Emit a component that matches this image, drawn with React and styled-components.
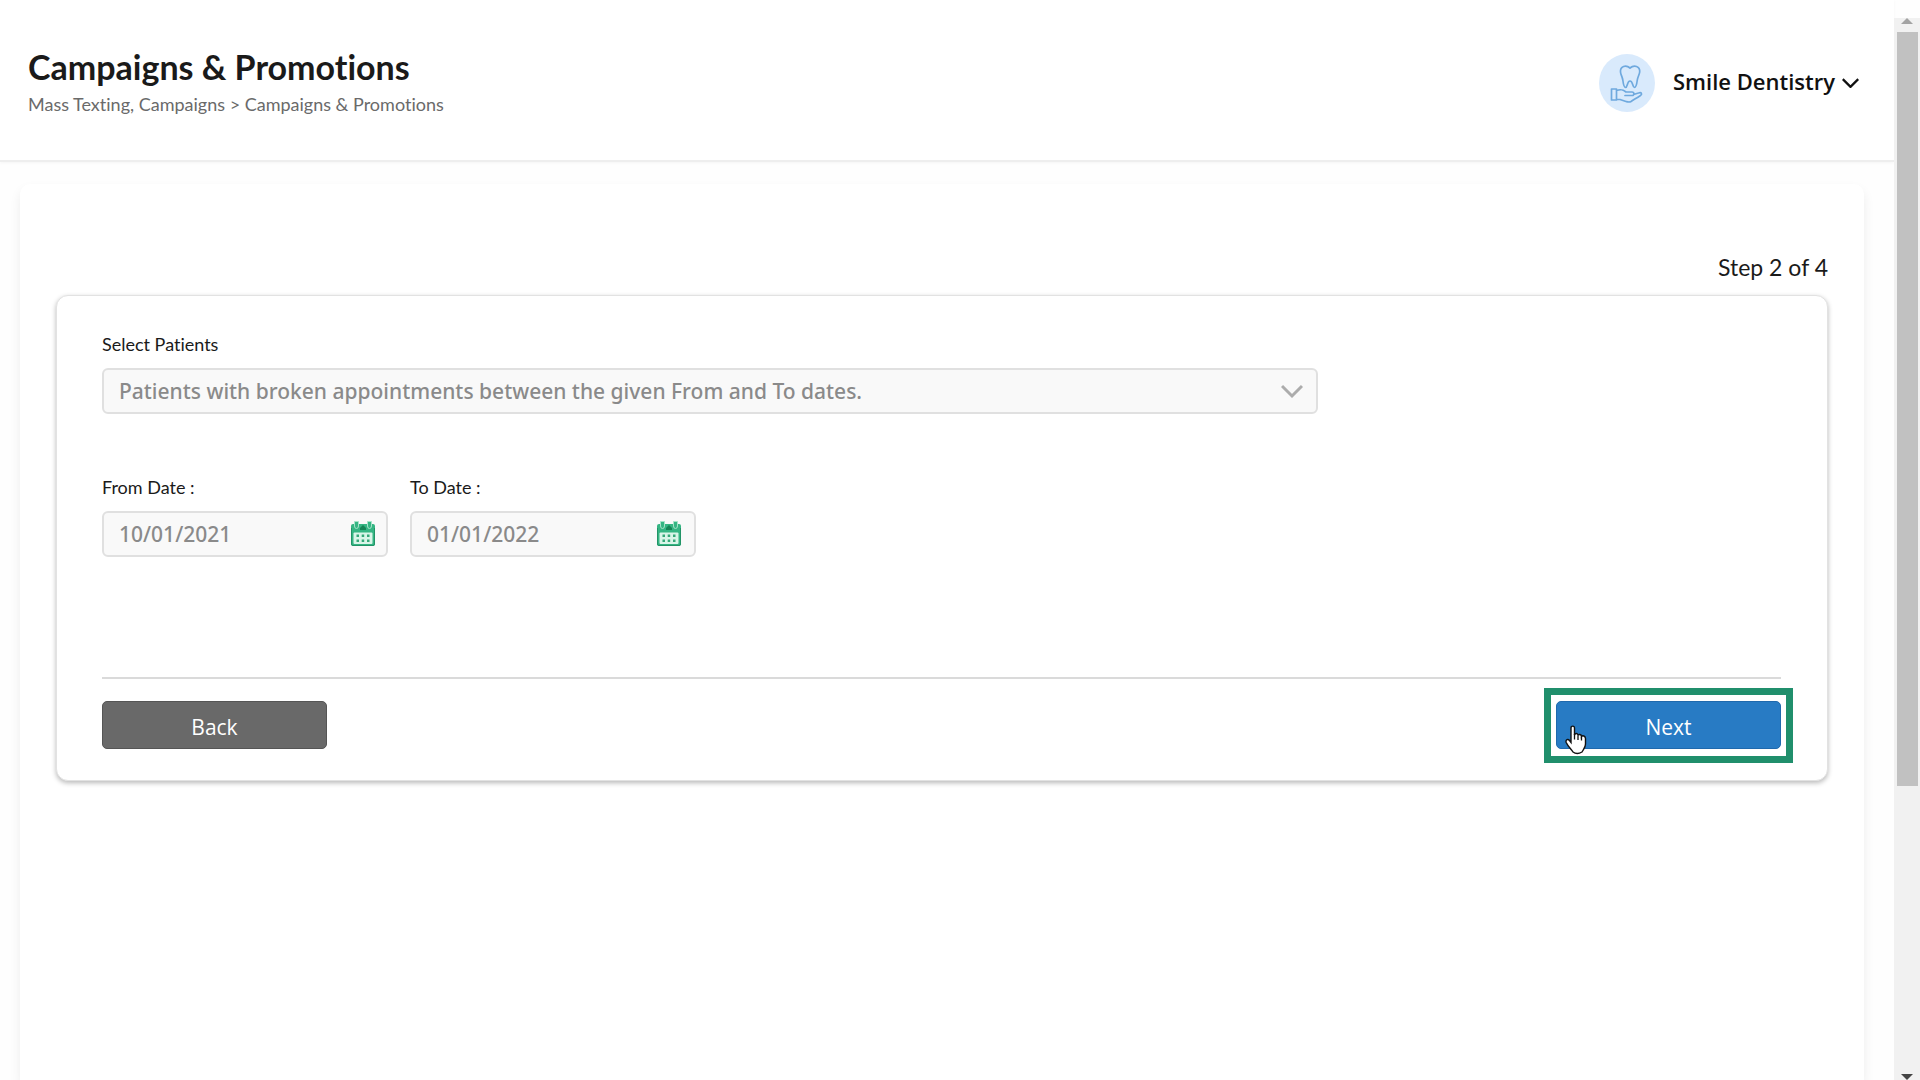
import React, { useState } from "react";
import styled, { createGlobalStyle } from "styled-components";

const GlobalStyle = createGlobalStyle`
  * {
    box-sizing: border-box;
  }
  body {
    margin: 0;
    background: #fefefe;
    color: #1a1a1a;
    font-family: Lato, sans-serif;
    font-variant-ligatures: none;
  }
`;

const Page = styled.div`
  display: flex;
  min-height: 100vh;
`;

const Main = styled.div`
  flex: 1;
  display: flex;
  flex-direction: column;
  min-width: 0;
`;

const Header = styled.header`
  display: flex;
  justify-content: space-between;
  align-items: flex-start;
  height: 162px;
  padding: 46px 35px 0 28px;
  background: #ffffff;
  border-bottom: 2px solid #eeeeee;
  box-shadow: 0 1px 3px rgba(0, 0, 0, 0.04);
`;

const Title = styled.h1`
  margin: 0;
  font-size: 34px;
  line-height: 42px;
  font-weight: 700;
`;

const Breadcrumb = styled.p`
  margin: 4px 0 0;
  font-size: 18px;
  line-height: 24px;
  color: #6a6a6a;
`;

const Account = styled.button`
  display: flex;
  align-items: center;
  padding: 8px 0 0;
  border: none;
  background: none;
  color: #111111;
  font-family: "Open Sans", sans-serif;
  font-size: 22px;
  line-height: 28px;
  font-weight: 600;
  cursor: pointer;
`;

const Avatar = styled.span`
  display: flex;
  width: 56px;
  height: 58px;
  margin-right: 18px;
  border-radius: 50%;
  background: #d9eafc;
`;

const AccountName = styled.span`
  margin-right: 7px;
  padding-bottom: 4px;
`;

const Panel = styled.main`
  flex: 1;
  margin: 22px 30px 0 20px;
  padding: 68px 36px 0;
  background: #ffffff;
  border-radius: 10px 10px 0 0;
  box-shadow: 0 6px 12px rgba(0, 0, 0, 0.07);
`;

const Step = styled.p`
  margin: 0;
  font-size: 23px;
  line-height: 30px;
  text-align: right;
`;

const Card = styled.form`
  margin-top: 13px;
  padding: 36px 46px 31px 45px;
  background: #ffffff;
  border: 1px solid #e2e2e2;
  border-radius: 12px;
  box-shadow: 0 2px 5px rgba(0, 0, 0, 0.28);
`;

const Field = styled.div`
  position: relative;
  width: ${(props) => props.$width};
`;

const Label = styled.label`
  display: block;
  margin-bottom: 12px;
  font-size: 18px;
  line-height: 24px;
`;

const controlStyle = `
  display: block;
  width: 100%;
  height: 46px;
  padding: 0 15px;
  border: 2px solid #e0e0e0;
  border-radius: 6px;
  background: #f9f9f9;
  color: #8a8a8a;
  font-family: "Noto Sans", sans-serif;
  font-size: 21px;
  font-weight: 500;
`;

const Select = styled.select`
  ${controlStyle}
  appearance: none;
`;

const DateInput = styled.input`
  ${controlStyle}
`;

const ControlIcon = styled.span`
  position: absolute;
  right: ${(props) => props.$right};
  bottom: 10px;
  display: flex;
  pointer-events: none;
`;

const DateRow = styled.div`
  display: flex;
  gap: 22px;
  margin-top: 61px;
`;

const Actions = styled.div`
  display: flex;
  justify-content: space-between;
  margin-top: 120px;
  padding-top: 22px;
  border-top: 2px solid #dadada;
`;

const Button = styled.button`
  position: relative;
  width: 225px;
  height: 48px;
  padding: 4px 0 0;
  border: 1px solid ${(props) => (props.$primary ? "#1f69ad" : "#555555")};
  border-radius: 5px;
  background: ${(props) => (props.$primary ? "#287bc4" : "#696969")};
  color: #ffffff;
  font-family: "Open Sans", sans-serif;
  font-size: 21px;
  line-height: 28px;
  cursor: pointer;
`;

const Highlight = styled.span`
  position: absolute;
  inset: -14px -13px -15px;
  border: 7px solid #208f6c;
  pointer-events: none;
`;

const Pointer = styled.svg`
  position: absolute;
  top: 23px;
  left: 8px;
`;

const Scrollbar = styled.div`
  display: flex;
  flex-direction: column;
  align-items: center;
  width: 26px;
  height: calc(100vh - 18px);
  margin-top: 18px;
  background: #f1f1f1;
`;

const Thumb = styled.div`
  width: 21px;
  height: 71%;
  margin: 8px 0 auto;
  background: #c1c1c1;
`;

function ToothIcon() {
  return (
    <svg width="56" height="58" viewBox="0 0 56 58" fill="none" stroke="#6fa9de" strokeWidth="1.7" strokeLinejoin="round" strokeLinecap="round">
      <path d="M31 14C27 10.5 21 12 21.500 18C21.800 21 23.200 22.500 23.800 26C24.300 30 25 33.500 26.600 33.500C28.600 33.500 28 27 31 27C34 27 33.500 33.500 35.400 33.500C37.200 33.500 37.800 30 38.300 26C38.800 22.500 40.300 21 40.700 18C41.200 12 35 10.500 31 14Z" />
      <path d="M12.500 35H17.500V46H12.500Z M17.500 36.500C22 35 24 35.500 27 38H33C35.500 38 35.500 41.500 33 41.500H26M34.500 40.500L39.500 39C42.500 38 43.500 40 41.500 41.500C37 44.500 34 46 32 47.500C30.500 48.500 29 48 27 47.500L21 45.500H17.500" />
    </svg>
  );
}

function Chevron({ width, height, color, stroke }) {
  return (
    <svg width={width} height={height} viewBox="0 0 22 12" fill="none">
      <path d="M1 1L11 11L21 1" stroke={color} strokeWidth={stroke} />
    </svg>
  );
}

function CalendarIcon() {
  return (
    <svg width="26" height="27" viewBox="0 0 26 27">
      <path d="M3 4H23Q25 4 25 6V24Q25 26 23 26H3Q1 26 1 24V6Q1 4 3 4Z" fill="#35b583" />
      <rect x="3.500" y="12.500" width="19" height="11.500" rx="1" fill="#d9f5e8" />
      <path d="M4.500 1.500H8.500V6Q8.500 8.500 6.500 8.500T4.500 6ZM17.500 1.500H21.500V6Q21.500 8.500 19.500 8.500T17.500 6Z" fill="#35b583" stroke="#a5e2c8" />
      <path d="M10 8L13 5L16 8V10H10Z" fill="#168456" />
      <g fill="#35a878">
        <path d="M6.500 14.500H9V17H6.500ZM11.700 14.500H14.200V17H11.700ZM17 14.500H19.500V17H17Z" />
        <path d="M6.500 19.500H9V22H6.500ZM11.700 19.500H14.200V22H11.700ZM17 19.500H19.500V22H17Z" />
      </g>
      <path d="M1.500 8V24Q1.500 25.500 3 25.500H23Q24.500 25.500 24.500 24V8" fill="none" stroke="#229467" />
    </svg>
  );
}

function Arrow({ up }) {
  return (
    <svg width="12" height="6" viewBox="0 0 12 6">
      <path d={up ? "M0 6L6 0L12 6Z" : "M0 0L6 6L12 0Z"} fill={up ? "#a3a3a3" : "#444444"} />
    </svg>
  );
}

function HandPointer() {
  return (
    <Pointer width="22" height="30" viewBox="0 0 22 30" aria-hidden="true">
      <path
        d="M6 3C6 0.500 9.500 0.500 9.500 3V10C10 8 13 8 13 10.500C13.500 9 16.500 9 16.500 11.500C17.500 10 20.500 11 20.500 13.500V19C20.500 22.500 18.500 24 17 27Q12 30 8 27C7 25 3 21.500 1.200 17.500C0.300 14.500 3 13.500 4.500 15.500L6 17.500Z"
        fill="#ffffff"
        stroke="#111111"
        strokeWidth="1.400"
      />
      <path d="M9.500 9V14.500M13 10.500V15M16.500 11.500V15.500" stroke="#111111" strokeWidth="1.300" />
    </Pointer>
  );
}

function App() {
  const [fromDate, setFromDate] = useState("10/01/2021");
  const [toDate, setToDate] = useState("01/01/2022");

  return (
    <Page>
      <GlobalStyle />
      <Main>
        <Header>
          <div>
            <Title>Campaigns &amp; Promotions</Title>
            <Breadcrumb>Mass Texting, Campaigns &gt; Campaigns &amp; Promotions</Breadcrumb>
          </div>
          <Account type="button">
            <Avatar>
              <ToothIcon />
            </Avatar>
            <AccountName>Smile Dentistry</AccountName>
            <Chevron width={17} height={10} color="#111111" stroke={3} />
          </Account>
        </Header>

        <Panel>
          <Step>Step 2 of 4</Step>
          <Card onSubmit={(e) => e.preventDefault()}>
            <Field $width="72.4%">
              <Label htmlFor="patients">Select Patients</Label>
              <Select id="patients">
                <option>Patients with broken appointments between the given From and To dates.</option>
              </Select>
              <ControlIcon $right="15px">
                <Chevron width={22} height={26} color="#acacac" stroke={3} />
              </ControlIcon>
            </Field>

            <DateRow>
              <Field $width="286px">
                <Label htmlFor="from-date">From Date :</Label>
                <DateInput id="from-date" type="text" value={fromDate} onChange={(e) => setFromDate(e.target.value)} />
                <ControlIcon $right="12px">
                  <CalendarIcon />
                </ControlIcon>
              </Field>
              <Field $width="286px">
                <Label htmlFor="to-date">To Date :</Label>
                <DateInput id="to-date" type="text" value={toDate} onChange={(e) => setToDate(e.target.value)} />
                <ControlIcon $right="14px">
                  <CalendarIcon />
                </ControlIcon>
              </Field>
            </DateRow>

            <Actions>
              <Button type="button">Back</Button>
              <Button type="submit" $primary>
                Next
                <Highlight />
                <HandPointer />
              </Button>
            </Actions>
          </Card>
        </Panel>
      </Main>

      <Scrollbar aria-hidden="true">
        <Arrow up />
        <Thumb />
        <Arrow />
      </Scrollbar>
    </Page>
  );
}

export default App;
